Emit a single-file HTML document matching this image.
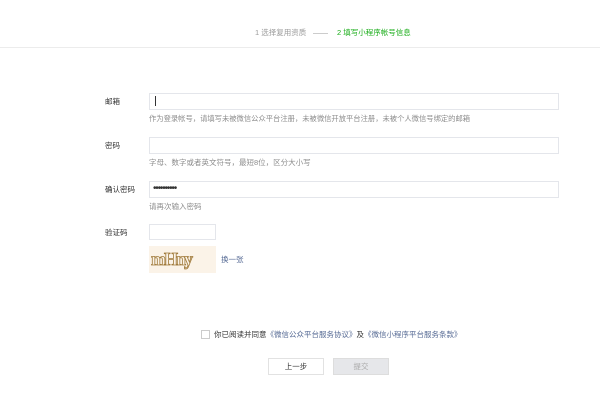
<!DOCTYPE html>
<html><head><meta charset="utf-8"><style>
*{margin:0;padding:0;box-sizing:border-box}
body{width:600px;height:400px;background:#fff;font-family:"Liberation Sans","Noto Sans CJK SC",sans-serif;font-size:7.5px;color:#333;position:relative;overflow:hidden}
.a{position:absolute;white-space:nowrap;line-height:1}
.inp{position:absolute;border:1px solid #e4e6eb;background:#fff}
.hint{color:#8d8d8d}
</style></head><body>
<div class="a" style="left:255px;top:29px;color:#9a9a9a">1 选择复用资质</div>
<div class="a" style="left:313px;top:33px;width:15px;border-top:1px solid #ccc"></div>
<div class="a" style="left:337px;top:29px;color:#1aad19">2 填写小程序帐号信息</div>
<div class="a" style="left:0;top:47px;width:600px;border-top:1px solid #ececec"></div>

<div class="a" style="left:105px;top:98px">邮箱</div>
<div class="inp" style="left:149px;top:93px;width:410px;height:17px"></div>
<div class="a" style="left:155px;top:96px;width:1px;height:10px;background:#333"></div>
<div class="a hint" style="left:149px;top:115px;font-size:7.3px">作为登录帐号，请填写未被微信公众平台注册，未被微信开放平台注册，未被个人微信号绑定的邮箱</div>

<div class="a" style="left:105px;top:142px">密码</div>
<div class="inp" style="left:149px;top:137px;width:410px;height:17px"></div>
<div class="a hint" style="left:149px;top:159px">字母、数字或者英文符号，最短8位，区分大小写</div>

<div class="a" style="left:105px;top:186px">确认密码</div>
<div class="inp" style="left:149px;top:181px;width:410px;height:17px"></div>
<div class="a" style="left:153px;top:184px;font-size:10px;letter-spacing:-1.2px">••••••••••</div>
<div class="a hint" style="left:149px;top:203px">请再次输入密码</div>

<div class="a" style="left:105px;top:229px">验证码</div>
<div class="inp" style="left:149px;top:224px;width:67px;height:16px"></div>
<div class="a" style="left:149px;top:246px;width:67px;height:27px;background:#fbf3e8;overflow:hidden">
<span style="position:absolute;left:2px;top:4px;font-family:'Liberation Serif',serif;font-size:18px;font-weight:bold;color:#fbf3e8;-webkit-text-stroke:0.8px #a07a3a;letter-spacing:-2px">mHny</span></div>
<div class="a" style="left:221px;top:256px;color:#576b95">换一张</div>

<div class="a" style="left:201px;top:330px;width:9px;height:9px;border:1px solid #ccc"></div>
<div class="a" style="left:214px;top:331px">你已阅读并同意<span style="color:#576b95">《微信公众平台服务协议》</span>及<span style="color:#576b95">《微信小程序平台服务条款》</span></div>

<div class="a" style="left:268px;top:358px;width:56px;height:17px;border:1px solid #e2e2e2;text-align:center;line-height:15px">上一步</div>
<div class="a" style="left:333px;top:358px;width:56px;height:17px;background:#e6e7ea;border:1px solid #ddd;color:#aaa;text-align:center;line-height:15px">提交</div>
</body></html>
